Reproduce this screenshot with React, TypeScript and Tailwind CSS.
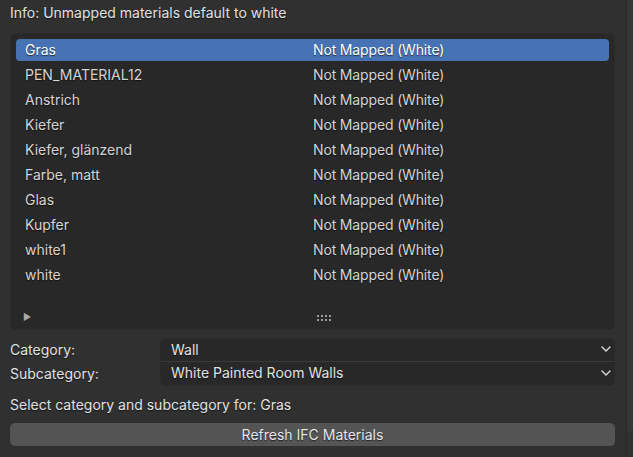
import React from 'react';

const materials = [
    'Gras',
    'PEN_MATERIAL12',
    'Anstrich',
    'Kiefer',
    'Kiefer, glänzend',
    'Farbe, matt',
    'Glas',
    'Kupfer',
    'white1',
    'white',
];

const font = { fontFamily: 'Inter, "Noto Sans", sans-serif' };

function Chevron() {
    return (
        <svg width="10" height="6" viewBox="0 0 10 6" className="shrink-0">
            <path d="M1 1 L5 5 L9 1" fill="none" stroke="#d8d8d8" strokeWidth="1.4" strokeLinecap="round" strokeLinejoin="round" />
        </svg>
    );
}

function Grip() {
    return (
        <svg width="14" height="6" viewBox="0 0 14 6">
            {[0, 4, 8, 12].map(x => (
                <g key={x} fill="#9a9a9a">
                    <rect x={x} y={0} width="2" height="2" />
                    <rect x={x} y={4} width="2" height="2" />
                </g>
            ))}
        </svg>
    );
}

export default function App() {
    return (
        <div className="w-[633px] h-[457px] flex bg-[#303030] text-[14px] overflow-hidden [text-shadow:0_1px_1px_rgba(0,0,0,0.6)]" style={font}>
            {/* Panel */}
            <div className="w-[626px] flex flex-col pl-[10px] pr-[11px]">
                <div className="h-[27px] pb-[3px] flex items-center text-[#e2e2e2]">Info: Unmapped materials default to white</div>

                {/* Material list */}
                <div className="mt-[6px] h-[297px] bg-[#282828] rounded-[5px] border border-[#2c2c2c] flex flex-col px-[5px] pt-[5px]">
                    <div className="flex flex-col gap-[3px]">
                        {materials.map((m, i) => (
                            <div
                                key={m}
                                className={`h-[22px] pb-[2px] flex items-center rounded-[4px] ${i === 0 ? 'bg-[#4772b3] text-white' : 'text-[#d4d4d4]'}`}
                            >
                                <span className="w-[297px] pl-[9px]">{m}</span>
                                <span className="tracking-[-0.15px]">Not Mapped (White)</span>
                            </div>
                        ))}
                    </div>
                    <div className="mt-auto h-[24px] flex items-center relative">
                        <span className="text-[#a8a8a8] text-[9px] pl-[7px] [text-shadow:none]">▶</span>
                        <div className="absolute left-[301px] top-[10px]">
                            <Grip />
                        </div>
                    </div>
                </div>

                {/* Category / Subcategory */}
                <div className="mt-[8px] flex">
                    <div className="w-[150px] flex flex-col text-[#e2e2e2]">
                        <div className="h-[24px] pb-[2px] flex items-center">Category:</div>
                        <div className="h-[24px] pb-[2px] flex items-center">Subcategory:</div>
                    </div>
                    <div className="flex-1 flex flex-col rounded-[5px] overflow-hidden border border-[#2a2a2a] bg-[#282828] text-[#e2e2e2]">
                        <div className="h-[23px] pb-[2px] flex items-center justify-between pl-[10px] pr-[3px] border-b border-[#3a3a3a]">
                            <span>Wall</span>
                            <Chevron />
                        </div>
                        <div className="h-[23px] pb-[2px] flex items-center justify-between pl-[10px] pr-[3px]">
                            <span>White Painted Room Walls</span>
                            <Chevron />
                        </div>
                    </div>
                </div>

                <div className="mt-[7px] h-[24px] pb-[2px] flex items-center text-[#e2e2e2]">Select category and subcategory for: Gras</div>

                <div className="mt-[6px] h-[23px] pb-[1px] rounded-[5px] bg-[#545454] flex items-center justify-center text-[#e6e6e6]">
                    Refresh IFC Materials
                </div>
            </div>

            {/* Side scroll strip */}
            <div className="w-[7px] flex flex-col border-l border-[#2a2a2a]">
                <div className="h-[432px] bg-[#363636] rounded-b-[3px]" />
            </div>
        </div>
    );
}
